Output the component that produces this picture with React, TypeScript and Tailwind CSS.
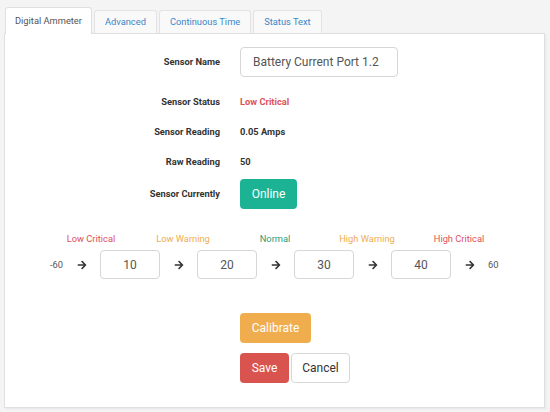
import { FaArrowRight } from "react-icons/fa";

const font = { fontFamily: "Roboto, 'Liberation Sans', sans-serif" };

// tabs across the top of the card
function Tabs() {
  const tabs = ["Advanced", "Continuous Time", "Status Text"];
  return (
    <div className="flex items-end gap-[2px] pl-[1px]">
      <div className="relative z-10 -mb-px flex h-[27px] items-center rounded-t-[3px] border border-b-0 border-[#e0e0e0] bg-white px-[9px] text-[9.3px] text-[#555]">
        Digital Ammeter
      </div>
      {tabs.map((t) => (
        <div
          key={t}
          className="flex h-[23px] items-center rounded-t-[3px] border border-b-0 border-[#e3e3e3] bg-[#f9f9f9] px-[10px] text-[9.3px] text-[#3a87c8]"
        >
          {t}
        </div>
      ))}
    </div>
  );
}

function Row({ label, children, className = "" }: { label: string; children: React.ReactNode; className?: string }) {
  return (
    <div className={`flex h-[30px] items-center gap-[20px] ${className}`}>
      <div className="w-[215px] text-right text-[9.3px] font-bold text-[#333]">{label}</div>
      <div className="flex items-center">{children}</div>
    </div>
  );
}

function Arrow() {
  return (
    <div className="flex w-[37px] justify-center text-[#333]">
      <FaArrowRight size={10} />
    </div>
  );
}

function Box({ v }: { v: string }) {
  return (
    <div className="flex h-[29px] w-[60px] items-center justify-center rounded-[4px] border border-[#d6d6d6] text-[12px] text-[#555]">
      {v}
    </div>
  );
}

export default function App() {
  const levels = [
    { name: "Low Critical", color: "text-[#e0505a]" },
    { name: "Low Warning", color: "text-[#f0ad4e]" },
    { name: "Normal", color: "text-[#2e9c7c]" },
    { name: "High Warning", color: "text-[#f0ad4e]" },
    { name: "High Critical", color: "text-[#e0505a]" },
  ];

  return (
    <div className="min-h-[412px] w-[550px] bg-[#f4f4f4] pl-[4px] pt-[7px]" style={font}>
      <Tabs />

      <div className="h-[375px] w-[541px] border border-[#e0e0e0] bg-white shadow-[1px_1px_2px_rgba(0,0,0,0.06)]">
        {/* sensor details */}
        <Row label="Sensor Name" className="mt-[13px]">
          <div className="flex h-[30px] w-[158px] items-center rounded-[4px] border border-[#d6d6d6] px-[12px] text-[12px] text-[#555]">
            Battery Current Port 1.2
          </div>
        </Row>
        <Row label="Sensor Status" className="mt-[10px]">
          <span className="text-[9.3px] font-bold text-[#e0505a]">Low Critical</span>
        </Row>
        <Row label="Sensor Reading">
          <span className="text-[9.3px] font-bold text-[#333]">0.05 Amps</span>
        </Row>
        <Row label="Raw Reading">
          <span className="text-[9.3px] font-bold text-[#333]">50</span>
        </Row>
        <Row label="Sensor Currently" className="mt-[2px]">
          <div className="flex h-[30px] w-[57px] items-center justify-center rounded-[4px] bg-[#1bb394] text-[12px] text-white">
            Online
          </div>
        </Row>

        {/* threshold levels */}
        <div className="mt-[23px] flex pl-[40px]">
          {levels.map((l) => (
            <div key={l.name} className={`w-[92px] text-center text-[9.3px] leading-[14px] ${l.color}`}>
              {l.name}
            </div>
          ))}
        </div>
        <div className="mt-[4px] flex items-center pl-[45px] text-[9.3px] text-[#555]">
          <span>-60</span>
          <Arrow />
          <Box v="10" />
          <Arrow />
          <Box v="20" />
          <Arrow />
          <Box v="30" />
          <Arrow />
          <Box v="40" />
          <Arrow />
          <span>60</span>
        </div>

        {/* actions */}
        <div className="ml-[235px] mt-[34px] flex flex-col items-start gap-[10px]">
          <button className="h-[30px] w-[71px] rounded-[4px] bg-[#f0ad4e] text-[12px] text-white">Calibrate</button>
          <div className="flex gap-[2px]">
            <button className="h-[30px] w-[49px] rounded-[4px] bg-[#d9534f] text-[12px] text-white">Save</button>
            <button className="h-[30px] w-[59px] rounded-[4px] border border-[#d6d6d6] bg-white text-[12px] text-[#333]">
              Cancel
            </button>
          </div>
        </div>
      </div>
    </div>
  );
}
